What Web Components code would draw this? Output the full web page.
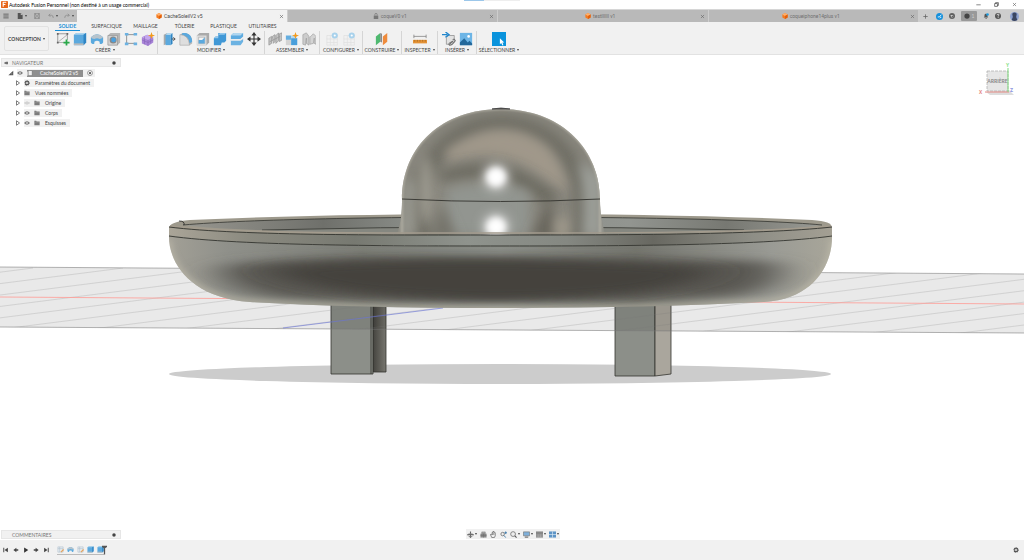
<!DOCTYPE html>
<html lang="fr">
<head>
<meta charset="utf-8">
<title>Autodesk Fusion Personnel</title>
<style>
  html, body { margin: 0; height: 100%; }
  body { font: 5px/8px Lato, "Liberation Sans", sans-serif; color: #444; background: #fff; overflow: hidden; }
</style>
</head>
<body>
<fusion-app></fusion-app>

<script>
const ICONS = {
  logo: '<rect width="16" height="16" rx="2" fill="#e8651a"/><path d="M5 13V3h7M5 8h5" stroke="#fff" stroke-width="2.5" fill="none"/>',
  menu: '<path d="M1 3h14M1 8h14M1 13h14" stroke="#555" stroke-width="2.2"/>',
  file: '<path d="M2 0h8l5 5v11H2z" fill="#555"/><path d="M10 0v5h5" fill="#bbb"/>',
  save: '<path d="M1 1h14v14H1z" fill="none" stroke="#888" stroke-width="2"/><path d="M4 1v5h8V1M4 15v-5h8v5" fill="none" stroke="#888" stroke-width="2"/>',
  undo: '<path d="M6 2 2 6l4 4M2 6h7q5 0 5 7" stroke="#888" stroke-width="2" fill="none"/>',
  redo: '<path d="m10 2 4 4-4 4M14 6H7q-5 0-5 7" stroke="#888" stroke-width="2" fill="none"/>',
  cube: '<path d="M1 4 8 0l7 4v8l-7 4-7-4z" fill="#f47b20"/><path d="m1 4 7 4 7-4-7-4z" fill="#ffb06b"/><path d="M8 8v8l7-4V4z" fill="#e2600c"/>',
  lock: '<rect x="2" y="7" width="12" height="9" fill="#777"/><path d="M5 7V4q0-3 3-3t3 3v3" stroke="#777" stroke-width="2" fill="none"/>',
  close: '<path d="m3 3 10 10M13 3 3 13" stroke="#666" stroke-width="2"/>',
  min: '<path d="M1 9h14" stroke="#444" stroke-width="2"/>',
  max: '<path d="M2 5h9v9H2zM5 5V2h9v9h-3" stroke="#333" stroke-width="2" fill="none"/>',
  plus: '<path d="M8 1v14M1 8h14" stroke="#666" stroke-width="2.5"/>',
  ext: '<circle cx="8" cy="8" r="8" fill="#1590dc"/><path d="M4 9h4l4-5M9 12l3-3" stroke="#fff" stroke-width="2" fill="none"/>',
  status: '<circle cx="8" cy="8" r="8" fill="#606060"/><path d="M4 5h5l3 3-2 4-4-1z" fill="#ccc"/><circle cx="9" cy="9" r="2" fill="#606060"/>',
  bell: '<path d="M2 12q3-2 2-7 1-4 5-3 4 1 3 6 0 3 2 4zM6 13h5l-3 3z" fill="#555"/><circle cx="12" cy="4" r="3.500" fill="#1b9be0"/>',
  help: '<circle cx="8" cy="8" r="8" fill="#555"/><path d="M5.500 6q0-3 3-3 4 1 1 4-1 1-1 2.500M8.500 11v2" stroke="#fff" stroke-width="2" fill="none"/>',
  user: '<circle cx="8" cy="8" r="8" fill="#8fa3d0"/><path d="M4 3q4-4 8 0l-1 6 2 5q-5 4-10 0l2-5z" fill="#3b4660"/>',
  sketch: '<path d="M2 12V2h11v7" fill="none" stroke="#777" stroke-width=".8"/><path d="M2 12h7M3 11 13 3" stroke="#888" stroke-width=".7"/><path d="M1 1h2v2H1zM12 1h2v2h-2zM1 11h2v2H1z" fill="#666"/><path d="M12 8.500v7M8.500 12h7" stroke="#2aa84a" stroke-width="2"/>',
  extrude: '<path d="m1 3 3-2h11v11l-3 3H1z" fill="#5ba9de"/><path d="m1 3 3-2h11l-3 2z" fill="#a9d3ee"/><path d="M12 3v12l3-3V1z" fill="#2f85c4"/><path d="M1 13h11v2H1z" fill="#bbb"/>',
  revolve: '<path d="M1 6q7-7 14 0v6q-2 3-4 1v-2q-3-2-6 0v2q-2 2-4-1z" fill="#5aa9de"/><path d="M1 6q7-7 14 0-2 2-4 2-3-2-6 0-3 0-4-2z" fill="#b8c4cc"/>',
  hole: '<path d="m1 4 3-3h11v11l-3 3H1z" fill="#b5b5b5"/><path d="M1 4h11v11H1z" fill="#d2d2d2" stroke="#888" stroke-width=".6"/><circle cx="7" cy="9" r="4" fill="#888"/><circle cx="7.500" cy="9" r="2.700" fill="#4aa0df"/>',
  pattern: '<path d="M3 3h10M3 3v10h10" stroke="#888" stroke-width="1" fill="none"/><path d="M1 1h4v3H1zM11 1h4v3h-4zM1 12h4v3H1zM11 12h4v3h-4z" fill="#6cb2e2"/>',
  form: '<path d="m1 6 6-3 7 3v6l-6 4-7-3z" fill="#a884d8"/><path d="m1 6 6-3 7 3-6 3z" fill="#c4a6ec"/><path d="M8 9v7M4 5v9M11 5v8M1 9l7 3 6-3" stroke="#8260b5" stroke-width=".6" fill="none"/><path d="m12 0 1 3 3 1-3 1-1 3-1-3-3-1 3-1z" fill="#f39a1c"/>',
  press: '<path d="M2 3 6 1v12l-4 2z" fill="#aaa"/><path d="M4 3h6v12H4z" fill="#5ba9de"/><path d="m4 3 2-2h6l-2 2z" fill="#b4d9f0"/><path d="M10 3v12l2-2V1z" fill="#2f85c4"/><path d="M11 8h4m-2-2 2 2-2 2" stroke="#444" stroke-width="1" fill="none"/>',
  fillet: '<path d="M1 3 4 1h4q7 2 7 10v2l-3 2H1z" fill="#b9b9b9"/><path d="M4 1h4q7 2 7 10l-3 2Q12 5 3 3z" fill="#5ba9de"/><path d="M1 3q10 0 11 12H1z" fill="#dedede" stroke="#999" stroke-width=".5"/>',
  shell: '<path d="m1 4 3-3h11v11l-3 3H1z" fill="#aaa"/><path d="M1 4h11v11H1z" fill="#ddd"/><path d="M3 6h7v7H3z" fill="#f4f4f4" stroke="#999" stroke-width=".6"/><path d="M3 13V9h4v4zM7 9l3-3v7H7z" fill="#5ba9de"/>',
  combine: '<path d="M6 1h9v9l-2 2h-3l-1 3H1V7l2-2h3z" fill="#4198d6"/><path d="m6 3 2-2h7l-2 2zM1 7l2-2h3v2z" fill="#95c8ec"/>',
  split: '<path d="m1 4 3-3h11v4l-3 3H1z" fill="#5eabe0"/><path d="m1 4 3-3h11l-3 3z" fill="#b0d6ef"/><path d="M1 9h11l3-2v4l-3 4H1z" fill="#6bb2e2"/><path d="M1 8h11l3-2v2l-3 2H1z" fill="#eee"/>',
  move: '<path d="M8 2v12M2 8h12" stroke="#333" stroke-width="1.300"/><path d="m8 0 3 4H5zM8 16l3-4H5zM0 8l4-3v6zM16 8l-4-3v6z" fill="#333"/>',
  joint: '<path d="m1 7 3-2v8l-3 2zM5 5l3-2v8l-2 2zM9 4l3-3v9l-3 3zM13 2l3-1v8l-3 2z" fill="#c4c4c4" stroke="#888" stroke-width=".7"/><path d="m2 11 12-6" stroke="#999"/>',
  newcomp: '<path d="M1 4h6v5H1z" fill="#65aee0"/><path d="M1 9h6v6H1z" fill="#d4d4d4"/><path d="M7 7h7v8H7z" fill="#4a9fdb"/><path d="M7 4h6v3H7z" fill="#b5d7ed"/><path d="m12 0 1 3 3 1-3 1-1 3-1-3-3-1 3-1z" fill="#f39a1c"/>',
  asbuilt: '<path d="m1 3 4-2 3 4v10l-3-2V7l-1 8-3-1z" fill="#ccc" stroke="#999" stroke-width=".7"/><path d="m9 6 4-4 3 3v9l-2-1V7l-1 6-4 1z" fill="#d4d4d4" stroke="#999" stroke-width=".7"/>',
  config: '<path d="M1 4h12v11H1zM1 8h12M1 12h12M5 4v11M9 4v11" fill="#f1f1f1" stroke="#e0e0e0" stroke-width=".8"/><circle cx="10" cy="4" r="3.500" fill="#a9d2ec"/><circle cx="10" cy="4" r="1.200" fill="#fff"/>',
  plane: '<path d="m1 5 5-4v10l-5 4z" fill="#4fb970"/><path d="m6 1 2 1v10l-2-1z" fill="#8a8a8a"/><path d="m9 5 5-4v10l-5 4z" fill="#ee8b3c"/>',
  measure: '<path d="M1 5h14M1 3v4M15 3v4" stroke="#777" stroke-width=".8"/><path d="M0 9h16v4H0z" fill="#e39236"/><path d="M2 9v2M5 9v2M8 9v2M11 9v2M14 9v2" stroke="#8b5414" stroke-width=".6"/>',
  insert: '<path d="m5 6 2-2h7v8l-2 2H5z" fill="#e2e2e2" stroke="#888" stroke-width=".8"/><path d="M0 3h6m-2-3 4 3-4 3" stroke="#2186cc" stroke-width="1.600" fill="none"/><path d="m9 14 4-4M10 15q-3 1-2-2l3-2q3 0 1 3zM13 12q3-1 2-3t-3 0" stroke="#666" stroke-width="1.100" fill="none"/>',
  image: '<path d="M1 1h14v14H1z" fill="#6db5e6"/><path d="m1 12 5-5 4 5 2-2 3 3v2H1z" fill="#23689b"/><circle cx="11" cy="5" r="1.500" fill="#fff"/>',
  select: '<path d="M0 0h16v16H0z" fill="#0a93dc"/><path d="m9 7 5 5h-2l1 3-1 .5-1.500-3L9 14z" fill="#fff"/>',
  eye: '<path d="M0 8q8-9 16 0-8 9-16 0z" fill="#777"/><circle cx="8" cy="8" r="3" fill="#ddd"/><circle cx="8" cy="8" r="1.500" fill="#555"/>',
  eyeoff: '<path d="M1 8q7-7 14 0-7 7-14 0z" fill="#eee" stroke="#bbb" stroke-width="1.500"/><circle cx="8" cy="8" r="2" fill="#bbb"/>',
  gear: '<path d="M7 0h2l1 3 3-1 1 2-2 2 4 1v2l-4 1 2 3-2 1-3-1-1 3H7l-1-3-3 1-1-2 2-3-4-1V7l4-1-2-3 2-1 3 1z" fill="#555"/><circle cx="8" cy="8" r="2.500" fill="#f1f1f1"/>',
  folder: '<path d="M1 2h5l1 2h8v10H1z" fill="#7c7c7c"/><path d="M1 6h14" stroke="#aaa"/>',
  doc: '<path d="M3 1h8l3 3v11H3z" fill="#eee" stroke="#666" stroke-width="1.500"/><path d="M1 4v11" stroke="#eee" stroke-width="2"/>',
  expand: '<path d="M4 2v12l8-6z" fill="#fff" stroke="#555" stroke-width="2"/>',
  open: '<path d="M14 2v12H1z" fill="#555"/><path d="M10 8v4" stroke="#aaa" stroke-width="1.500"/>',
  radio: '<circle cx="8" cy="8" r="6.500" fill="#fff" stroke="#555" stroke-width="1.500"/><circle cx="8" cy="8" r="3" fill="#555"/>',
  dot: '<circle cx="8" cy="8" r="7" fill="#444"/>',
  collapse: '<path d="m0 8 7-5v10zM9 3v10h6V3z" fill="#444"/>',
  orbit: '<path d="M8 1v14M1 8h14" stroke="#666" stroke-width="2.500"/><path d="m8 16-4-4h8zM8 5l3 3-3 3-3-3z" fill="#666"/><ellipse cx="8" cy="9" rx="7" ry="3" fill="none" stroke="#888" stroke-width="1.500"/>',
  look: '<path d="M1 6h14v9H1z" fill="#888"/><path d="M4 2h8v4H4zM1 10h14M8 6v9" fill="#aaa" stroke="#666"/>',
  hand: '<path d="M4 15 1 8l2-1 2 2V3h2V1h2v2h2l1 1v7l-2 4z" fill="#eee" stroke="#555" stroke-width="1.500"/><path d="M7 4v5M9 4v5" stroke="#555"/>',
  zoom: '<circle cx="6" cy="7" r="4" fill="#eee" stroke="#555" stroke-width="1.500"/><path d="m9 10 4 5M13 1v6M10 4h6" stroke="#3977a8" stroke-width="2"/>',
  zoomfit: '<circle cx="7" cy="7" r="5.500" fill="#eee" stroke="#555" stroke-width="1.500"/><path d="m11 11 4 4" stroke="#555" stroke-width="2.500"/>',
  display: '<path d="M1 2h14v9H1z" fill="#7fb0da" stroke="#777" stroke-width="1.500"/><path d="M4 14h8" stroke="#666" stroke-width="2.500"/>',
  gridview: '<path d="M0 1h16v14H0z" fill="#888"/><path d="M0 9h16M0 12h16M5 8v7M10 8v7" stroke="#bbb"/>',
  views: '<path d="M0 1h16v14H0z" fill="#5d94c6"/><path d="M8 1v14M0 8h16" stroke="#dce9f5" stroke-width="1.500"/>',
  first: '<path d="M2 2v12" stroke="#444" stroke-width="2.500"/><path d="M13 2v12L4 8z" fill="#444"/>',
  prev: '<path d="M9 2v12L1 8zM9 6h5v4H9z" fill="#444"/>',
  play: '<path d="M3 1v14l11-7z" fill="#333"/>',
  next: '<path d="M7 2v12l8-6zM2 6h5v4H2z" fill="#444"/>',
  last: '<path d="M14 2v12" stroke="#444" stroke-width="2.500"/><path d="M3 2v12l9-6z" fill="#444"/>',
  tsketch: '<path d="M2 2h12v12H2zM2 6h12M6 2v12" fill="#e8edf1" stroke="#abc" stroke-width="1.200"/><path d="m8 13 6-6 2 2-6 6z" fill="#e5a35c"/>',
  marker: '<path d="M0 0h16v4l-6 4v20H6V8L0 4z" fill="#555"/>'
};

const define = (tag, css, render) => customElements.define(tag, class extends HTMLElement {
  constructor() {
    super();
    this.attachShadow({ mode: 'open' });
  }
  connectedCallback() {
    this.shadowRoot.innerHTML = `<style>
      *, ::before { box-sizing: border-box; }
      button { font: inherit; color: inherit; background: none; border: 0; padding: 0; margin: 0; display: flex; align-items: center; justify-content: center; }
      a { color: inherit; text-decoration: none; }
      ${css}</style>${render(this)}`;
  }
});
const icon = (name, size = 8) => `<fusion-icon name="${name}" style="--size:${size}px"></fusion-icon>`;
const caret = '<fusion-caret></fusion-caret>';

define('fusion-icon',
  ':host { display: block; flex: none; width: var(--size); height: var(--height, var(--size)); } svg { display: block; width: 100%; height: 100%; }',
  el => `<svg viewBox="0 0 16 ${el.getAttribute('name') === 'marker' ? 28 : 16}" aria-hidden="true">${ICONS[el.getAttribute('name')]}</svg>`);

define('fusion-caret',
  ':host { display: inline-block; flex: none; border: 1px solid transparent; border-top: 2px solid #444; border-bottom: 0; margin-left: 2px; vertical-align: middle; }',
  () => '');

define('title-bar', `
  :host { display: flex; height: 9px; align-items: center; background: #fff; color: #000; padding: 0 7px 0 1px; gap: 1px; position: relative; }
  h1 { font: inherit; margin: 0; flex: 1; white-space: nowrap; }
  .win { display: flex; gap: 13px; }
  i { position: absolute; left: 50%; top: 0; width: 56px; height: 1px; margin-left: -48px; background: linear-gradient(90deg, #9cc7ea 20px, #eee 20px); }`,
  () => `${icon('logo', 7)}<h1>Autodesk Fusion Personnel (non destiné à un usage commercial)</h1><i></i>
    <div class="win"><button aria-label="Réduire">${icon('min', 5)}</button><button aria-label="Agrandir">${icon('max', 5)}</button><button aria-label="Fermer">${icon('close', 5)}</button></div>`);

define('doc-tab', `
  :host { display: flex; flex: 1; align-items: center; height: 12px; background: #b9b9b9; color: #707070; padding: 0 3px; margin-right: 1px; font-family: Roboto, sans-serif; }
  :host([active]) { background: #f1f1f1; color: #444; }
  .name { flex: 1; display: flex; justify-content: center; align-items: center; gap: 2px; }`,
  el => `<a class="name" href="#">${icon(el.getAttribute('icon'), 6)}<slot></slot></a><button aria-label="Fermer l'onglet">${icon('close', 5)}</button>`);

define('tab-bar', `
  :host { display: flex; height: 13px; align-items: flex-end; background: #cdcdcd; border-top: 1px solid #d6d6d6; }
  .quick { display: flex; width: 77px; height: 12px; align-items: center; padding-left: 3px; background: #bdbdbd; }
  .quick button:nth-child(1) { margin-right: 8px; }
  .quick button:nth-child(2) { margin-right: 7px; }
  .quick button:nth-child(3) { margin-right: 8px; }
  .quick button:nth-child(4) { margin-right: 6px; }
  .tabs { display: flex; flex: 1; }
  .right { display: flex; width: 105px; height: 12px; align-items: center; gap: 6px; padding-left: 2px; }
  .right button:last-child { margin-left: 3px; }
  .add { width: 9px; }
  .jobs { width: 16px; height: 10px; border-radius: 1px; background: #999; gap: 2px; color: #ccc; }`,
  () => `<div class="quick"><button aria-label="Menu">${icon('menu', 6)}</button><button aria-label="Fichier">${icon('file', 6)}${caret}</button><button aria-label="Enregistrer">${icon('save', 6)}</button><button aria-label="Annuler">${icon('undo', 6)}${caret}</button><button aria-label="Rétablir">${icon('redo', 6)}${caret}</button></div>
  <nav class="tabs"><doc-tab active icon="cube">CacheSoleilV2 v5</doc-tab><doc-tab icon="lock">coqueV0 v1</doc-tab><doc-tab icon="cube">testllllll v1</doc-tab><doc-tab icon="cube">coqueiphone14plus v1</doc-tab></nav>
  <div class="right"><button class="add" aria-label="Nouveau">${icon('plus', 5)}</button><button aria-label="Extensions">${icon('ext', 7)}</button><button aria-label="État">${icon('status', 6)}</button><button class="jobs">${icon('dot', 6)}1</button><button aria-label="Notifications">${icon('bell', 6)}</button><button aria-label="Aide">${icon('help', 6)}</button><button aria-label="Compte">${icon('user', 9)}</button></div>`);

define('tool-group', `
  :host { display: flex; flex-direction: column; align-items: center; border-right: 1px solid #d5d5d5; height: 23px; padding-top: 1px; box-sizing: border-box; min-width: 0; }
  .icons { display: flex; gap: var(--gap, 3px); }
  .label { height: 8px; white-space: nowrap; }`,
  el => `<div class="icons">${el.getAttribute('icons').split(' ').map(n => `<button aria-label="${n}">${icon(n, 14)}</button>`).join('')}</div><button class="label"><slot></slot>${caret}</button>`);

define('tool-ribbon', `
  :host { display: grid; grid-template-columns: 53px 1fr; height: 33px; background: #f1f1f1; border-bottom: 1px solid #e2e2e2; }
  .space { width: 45px; height: 25px; margin: 4px 0 0 4px; border: 1px solid #e2e2e2; border-radius: 2px; font-weight: 700; }
  .tabs { display: flex; height: 9px; padding-left: 2px; }
  .tabs a { width: 39px; text-align: center; line-height: 9px; }
  .tabs a:first-child { width: 25px; margin-right: 7px; color: #1a8fd6; font-weight: 700; border-bottom: 1px solid #1a8fd6; }
  .groups { display: grid; grid-template-columns: 105px 107px 55px 43px 39px 36px 39px 44px; }
  .groups tool-group:last-child { border: 0; }`,
  () => `<button class="space">CONCEPTION ${caret}</button>
  <div><nav class="tabs">${['SOLIDE', 'SURFACIQUE', 'MAILLAGE', 'TÔLERIE', 'PLASTIQUE', 'UTILITAIRES'].map(t => `<a href="#">${t}</a>`).join('')}</nav>
  <div class="groups">
    <tool-group icons="sketch extrude revolve hole pattern form">CRÉER</tool-group>
    <tool-group icons="press fillet shell combine split move">MODIFIER</tool-group>
    <tool-group icons="joint newcomp asbuilt">ASSEMBLER</tool-group>
    <tool-group icons="config config">CONFIGURER</tool-group>
    <tool-group icons="plane">CONSTRUIRE</tool-group>
    <tool-group icons="measure">INSPECTER</tool-group>
    <tool-group icons="insert image">INSÉRER</tool-group>
    <tool-group icons="select">SÉLECTIONNER</tool-group>
  </div></div>`);

define('panel-head', `
  :host { display: flex; height: 9px; width: 120px; align-items: center; padding: 0 4px 0 2px; background: #f1f1f1; border: 1px solid #e6e6e6; color: #777; box-sizing: border-box; }
  span { flex: 1; padding-left: 3px; }
  .lead { width: 5px; }`,
  el => `<div class="lead">${el.hasAttribute('collapsible') ? icon('collapse', 4) : ''}</div><span><slot></slot></span><button aria-label="Options">${icon('dot', 4)}</button>`);

define('tree-row', `
  :host { display: flex; height: 10px; align-items: center; padding-left: 14px; }
  :host([root]) { padding-left: 7px; margin-top: 1px; }
  .box { display: flex; height: 8px; align-items: center; gap: 4px; background: #f1f1f1; padding: 0 4px 0 0; margin-left: 3px; white-space: nowrap; }
  .name { display: flex; align-items: center; gap: 5px; }
  :host([root]) .box { padding-right: 2px; }
  :host([root]) .name { background: #8f8f8f; color: #fff; height: 7px; gap: 7px; padding-right: 5px; }`,
  el => `<button aria-label="Développer">${icon(el.hasAttribute('root') ? 'open' : 'expand', 6)}</button><div class="box">${el.hasAttribute('eye') ? icon(el.getAttribute('eye'), 6) : ''}<span class="name">${icon(el.getAttribute('icon'), 6)}<span><slot></slot></span></span>${el.hasAttribute('root') ? icon('radio', 6) : ''}</div>`);

define('model-scene', ':host { display: block; } svg { display: block; width: 100%; height: 100%; }', () => {
  let lines = '';
  for (let x = -487; x < 1060; x += 90) lines += `M${x} 334l520-66`;
  return `<svg viewBox="0 55 1024 485" preserveAspectRatio="xMidYMid slice" role="img" aria-label="Modèle 3D">
  <defs>
    <filter id="b1" x="-20%" y="-20%" width="140%" height="140%"><feGaussianBlur stdDeviation="1"/></filter>
    <filter id="b2" x="-50%" y="-50%" width="200%" height="200%"><feGaussianBlur stdDeviation="3"/></filter>
    <filter id="b5" x="-80%" y="-50%" width="260%" height="200%"><feGaussianBlur stdDeviation="6"/></filter>
    <filter id="b9" x="-50%" y="-80%" width="200%" height="260%"><feGaussianBlur stdDeviation="20 5"/></filter>
    <pattern id="rows" width="20" height="2" patternUnits="userSpaceOnUse" patternTransform="rotate(.35)"><path d="M0 1h20" stroke="#000" stroke-opacity=".1" stroke-width="1"/></pattern>
    <clipPath id="plane"><path d="M0 267 1024 274v59L0 327z"/></clipPath>
    <clipPath id="dome"><path d="M402 200C402 145 443 109 501 109S600 147 600 200C600 213 602 222 605 234Q500 237 397 234C401 222 402 213 402 200z"/></clipPath>
    <clipPath id="bowl"><path d="M169 235C240 246 400 246 500 246S760 246 832 235C833 262 816 299 764 302Q650 308 500 308T250 302C190 298 168 262 169 235z"/></clipPath>
    <linearGradient id="rim"><stop offset="0" stop-color="#aaa598"/><stop offset=".12" stop-color="#8b8a80"/><stop offset=".28" stop-color="#777971"/><stop offset=".45" stop-color="#8f938d"/><stop offset=".6" stop-color="#858882"/><stop offset=".73" stop-color="#686861"/><stop offset=".88" stop-color="#8e8e86"/><stop offset="1" stop-color="#a39f93"/></linearGradient>
    <linearGradient id="inside"><stop offset="0" stop-color="#989790"/><stop offset=".22" stop-color="#6f706b"/><stop offset=".34" stop-color="#868984"/><stop offset=".7" stop-color="#929590"/><stop offset=".85" stop-color="#777872"/><stop offset="1" stop-color="#999a94"/></linearGradient>
    <linearGradient id="under"><stop offset="0" stop-color="#a5a298"/><stop offset=".1" stop-color="#8f908a"/><stop offset=".3" stop-color="#7c7e77"/><stop offset=".5" stop-color="#8b8e88"/><stop offset=".7" stop-color="#74756e"/><stop offset=".9" stop-color="#9a9b95"/><stop offset="1" stop-color="#aaa79a"/></linearGradient>
    <linearGradient id="slot"><stop offset="0" stop-color="#45443f"/><stop offset="1" stop-color="#77766f"/></linearGradient>
  </defs>
  <ellipse cx="500" cy="374" rx="331" ry="10" fill="#ccc"/>
  <g stroke="#33332f" stroke-width=".8">
    <path d="M373 300h13v72h-13z" fill="url(#slot)"/><path d="M331 300h42v74h-42z" fill="#8c8f89"/><path d="M371 300v74"/>
    <path d="M615 300h40v76h-40z" fill="#8c8f89"/><path d="M655 300h16v74l-16 2z" fill="#aaa69d"/>
  </g>
  <g clip-path="url(#plane)">
    <path d="M0 267 1024 274v59L0 327z" fill="#000" fill-opacity=".04"/>
    <path d="M0 260h1024v80H0z" fill="url(#rows)"/>
    <path d="${lines}" stroke="#777" stroke-opacity=".35" stroke-width=".6"/>
  </g>
  <path d="M0 267 1024 274M0 327 1024 333" stroke="#777" stroke-opacity=".7" stroke-width=".8"/>
  <path d="M0 297 1024 304" stroke="#ff9a94" stroke-width=".8"/>
  <path d="m283 328 160-20" stroke="#6975d8" stroke-opacity=".8" stroke-width=".8"/>

  <path d="M169 228C169 224 176 221 190 220Q320 214 500 214T812 220C826 221 832 223 832 228C790 236 620 240 500 240S200 236 169 228z" fill="#9d998c"/>
  <path d="M183 225C250 219 390 217 500 217S760 219 822 225C770 233 620 234 500 234S240 232 183 225z" fill="url(#inside)"/>
  <path d="M183 225C250 219 390 217 500 217S760 219 822 225" fill="none" stroke="#343530" stroke-width=".8"/>
  <path d="M262 230Q380 227 500 227T744 230C670 234 590 235 500 235S320 234 262 230z" fill="#858780"/>
  <path d="M262 230Q380 227 500 227T744 230" fill="none" stroke="#343530" stroke-width=".8"/>
  <path d="M179 221q6 0 5 4" fill="none" stroke="#222" stroke-width=".8"/>

  <g clip-path="url(#dome)">
    <path d="M390 100h220v140H390z" fill="#88867d"/>
    <ellipse cx="501" cy="208" rx="82" ry="84" fill="none" stroke="#706e65" stroke-width="18" filter="url(#b5)"/>
    <path d="M444 152Q500 112 545 145 562 160 568 194L545 178Q500 142 450 162z" fill="#a0988a" filter="url(#b5)"/>
    <path d="M436 174Q462 162 492 164T560 197L545 204Q500 168 446 182z" fill="#6c6a61" filter="url(#b5)"/>
    <path d="M446 190Q490 176 530 192V236H446z" fill="#929590" filter="url(#b5)"/>
    <path d="M404 180h12v56h-18z" fill="#96968e" filter="url(#b5)"/>
    <ellipse cx="426" cy="190" rx="6" ry="34" fill="#a3a096" filter="url(#b5)"/>
    <path d="M442 204 430 240h28z" fill="#75736b" filter="url(#b5)"/>
    <path d="M550 196 530 240h28z" fill="#67655c" filter="url(#b5)"/>
    <ellipse cx="562" cy="228" rx="8" ry="12" fill="#9f998b" filter="url(#b5)"/>
    <path d="M578 160Q586 190 582 238h20V176z" fill="#9b9e98" filter="url(#b5)"/>
    <path d="M402 236V200C402 145 443 109 501 109S600 147 600 200V236" fill="none" stroke="#bdbaae" stroke-width="1.500" filter="url(#b1)"/>
    <circle cx="496" cy="177" r="12" fill="#e5e5e5" filter="url(#b5)"/><circle cx="496" cy="177" r="9" fill="#fff" filter="url(#b2)"/>
    <circle cx="496" cy="227" r="12" fill="#e5e5e5" filter="url(#b5)"/><circle cx="496" cy="227" r="9" fill="#fff" filter="url(#b2)"/>
  </g>
  <path d="M402 199Q500 204 600 199" fill="none" stroke="#33332f" stroke-width=".9"/>
  <path d="M492 109q9-2 18 0z" fill="#55544f" stroke="#444" stroke-width=".8"/>

  <path d="M169 227C240 236 400 235 500 235S760 235 832 227V236C760 246 620 246 500 246S240 246 169 236z" fill="url(#rim)"/>
  <path d="M170 226C240 234 400 233 500 233S760 233 831 226" fill="none" stroke="#a39b8d" stroke-width="1.500"/>
  <g clip-path="url(#bowl)">
    <path d="M160 230h680v85H160z" fill="url(#under)"/>
    <path d="M222 268Q250 255 500 257T775 262Q792 285 735 296 500 305 285 298 222 290 222 268z" fill="#5a5852" filter="url(#b9)"/>
    <path d="M270 268Q350 259 490 260T710 268Q705 295 500 300 295 296 270 268z" fill="#45433d" filter="url(#b9)"/>
    <path d="M169 240C168 262 190 298 250 302Q350 309 500 309T764 302C816 299 833 262 832 240" fill="none" stroke="#bfbbab" stroke-width="4" filter="url(#b2)"/>
  </g>
  <path d="M169 227C240 236 400 235 500 235S760 235 832 227M169 236C240 246 400 246 500 246S760 246 832 236" fill="none" stroke="#33342f" stroke-width=".9"/>
  </svg>`;
});

define('view-cube', ':host { display: block; width: 48px; height: 42px; } svg { display: block; width: 100%; height: 100%; font: 700 5px Roboto, sans-serif; }',
  () => `<svg viewBox="0 0 48 42" role="img" aria-label="Cube de vue"><path d="m10 32 4 3h24l-5-5z" fill="#ddd"/><path d="M11 11h21v20H11z" fill="#e6e6e6" stroke="#aaa" stroke-width=".7" stroke-dasharray="3 1"/><text x="21.500" y="23" text-anchor="middle" fill="#888" font-family="Lato">ARRIÈRE</text><path d="M9 32h24" stroke="#e58a84"/><path d="M32 32V8" stroke="#7edb7e"/><text x="3" y="34" fill="#e58a84">X</text><text x="30" y="7" fill="#8edf8e">Y</text><text x="34" y="32" fill="#8d97e0">Z</text></svg>`);

define('nav-bar', `
  :host { display: flex; height: 10px; align-items: center; gap: 3px; padding: 0 1px; background: #f1f1f1; }
  fusion-caret { margin-left: 1px; }`,
  () => ['orbit v', 'look', 'hand', 'zoom', 'zoomfit v', 'display v', 'gridview v', 'views v'].map(s => { const [n, v] = s.split(' '); return `<button aria-label="${n}">${icon(n, 7)}${v ? caret : ''}</button>`; }).join(''));

define('time-line', `
  :host { display: flex; height: 20px; align-items: center; background: #f1f1f1; padding: 0 5px 0 3px; }
  .play { display: flex; gap: 4px; }
  .features { display: flex; gap: 3px; margin-left: 8px; padding-bottom: 1px; border-bottom: 1px solid #bbb; }
  .mark { --height: 12px; margin: 0 auto 0 -2px; }`,
  () => `<div class="play">${['first', 'prev', 'play', 'next', 'last'].map(n => `<button aria-label="${n}">${icon(n, 6)}</button>`).join('')}</div>
  <div class="features">${['tsketch', 'revolve', 'tsketch', 'extrude', 'extrude'].map(n => `<button aria-label="${n}">${icon(n, 7)}</button>`).join('')}</div><div class="mark">${icon('marker', 5)}</div><button aria-label="Préférences">${icon('gear', 6)}</button>`);

define('fusion-app', `
  :host { display: flex; flex-direction: column; height: 100vh; }
  main { flex: 1; min-height: 0; position: relative; display: flex; flex-direction: column; justify-content: space-between; }
  model-scene { position: absolute; inset: 0; }
  .top, .bottom { position: relative; display: flex; justify-content: space-between; }
  .top { padding: 3px 0 0 1px; }
  view-cube { margin-top: 2px; }
  .bottom { display: grid; grid-template-columns: 1fr auto 1fr; align-items: end; padding: 0 0 1px 1px; }`,
  () => `<title-bar></title-bar><tab-bar></tab-bar><tool-ribbon></tool-ribbon>
  <main><model-scene></model-scene>
    <div class="top"><aside><panel-head collapsible>NAVIGATEUR</panel-head>
      <tree-row root eye="eye" icon="doc">CacheSoleilV2 v5</tree-row>
      <tree-row icon="gear">Paramètres du document</tree-row>
      <tree-row icon="folder">Vues nommées</tree-row>
      <tree-row eye="eyeoff" icon="folder">Origine</tree-row>
      <tree-row eye="eye" icon="folder">Corps</tree-row>
      <tree-row eye="eye" icon="folder">Esquisses</tree-row></aside>
      <view-cube></view-cube></div>
    <div class="bottom"><panel-head>COMMENTAIRES</panel-head><nav-bar></nav-bar><span></span></div>
  </main><time-line></time-line>`);
</script>
</body>
</html>
